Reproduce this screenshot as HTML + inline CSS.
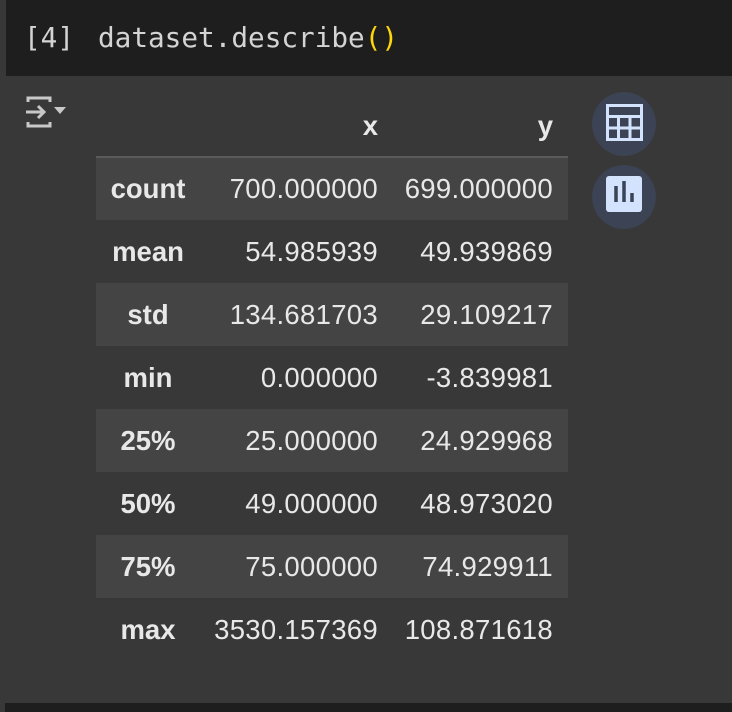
<!DOCTYPE html>
<html><head><style>
body{margin:0;width:732px;height:712px;background:#383838;position:relative;overflow:hidden;font-family:"Liberation Sans",Arial,sans-serif}
.code{position:absolute;left:6px;top:0;width:726px;height:76px;background:#1e1e1e}
.code div{position:absolute;top:21px;font-family:"DejaVu Sans Mono","Liberation Mono",monospace;font-size:27.7px;color:#d4d4d4}
.bot{position:absolute;left:5px;top:703px;width:727px;height:9px;background:#1e1e1e}
table{position:absolute;left:96px;top:95px;border-collapse:collapse;color:#e8e8e8;font-size:27.5px}
td,th{height:63px;padding:0;box-sizing:border-box}
th.i{width:104px;text-align:center;font-weight:bold}
td.a{width:186px;text-align:right;padding-right:8px;letter-spacing:0.3px}
td.b{width:182px;text-align:right;padding-right:15px;letter-spacing:0.3px}
thead th{font-weight:bold;text-align:right;border-bottom:2px solid #5a5a5a;height:62px}
tr.s{background:#444}
.c{position:absolute;left:592px;width:64px;height:64px;border-radius:50%;background:#3b4354}
</style></head><body>
<div class="code"><div style="left:18px">[4]</div><div style="left:92px">dataset.describe<span style="color:#ffd70a">()</span></div></div>
<svg style="position:absolute;left:24px;top:94px" width="48" height="36" viewBox="0 0 48 36">
<path d="M4 8V4h22v4M4 28v4h22v-4" fill="none" stroke="#c8c8c8" stroke-width="3"/>
<path d="M2 18h18M14 12l6 6-6 6" fill="none" stroke="#c8c8c8" stroke-width="3"/>
<path d="M30 13h12l-6 7z" fill="#c8c8c8"/></svg>
<table>
<thead><tr><th class="i"></th><th style="padding-right:8px">x</th><th style="padding-right:15px">y</th></tr></thead>
<tbody>
<tr class="s"><th class="i">count</th><td class="a">700.000000</td><td class="b">699.000000</td></tr>
<tr><th class="i">mean</th><td class="a">54.985939</td><td class="b">49.939869</td></tr>
<tr class="s"><th class="i">std</th><td class="a">134.681703</td><td class="b">29.109217</td></tr>
<tr><th class="i">min</th><td class="a">0.000000</td><td class="b">-3.839981</td></tr>
<tr class="s"><th class="i">25%</th><td class="a">25.000000</td><td class="b">24.929968</td></tr>
<tr><th class="i">50%</th><td class="a">49.000000</td><td class="b">48.973020</td></tr>
<tr class="s"><th class="i">75%</th><td class="a">75.000000</td><td class="b">74.929911</td></tr>
<tr><th class="i">max</th><td class="a">3530.157369</td><td class="b">108.871618</td></tr>
</tbody></table>
<div class="c" style="top:92px"><svg width="64" height="64"><rect x="15.5" y="13.5" width="34" height="34" fill="none" stroke="#d3e3fd" stroke-width="3"/><path d="M15 24.5h35M15 36h35M26.5 24v24M38 24v24" stroke="#d3e3fd" stroke-width="3"/></svg></div>
<div class="c" style="top:165px"><svg width="64" height="64"><rect x="14" y="11" width="36" height="36" rx="3" fill="#d3e3fd"/><path d="M24 21v16M32 16v21M40 28v9" stroke="#3b4354" stroke-width="3.5"/></svg></div>
<div class="bot"></div>
</body></html>
